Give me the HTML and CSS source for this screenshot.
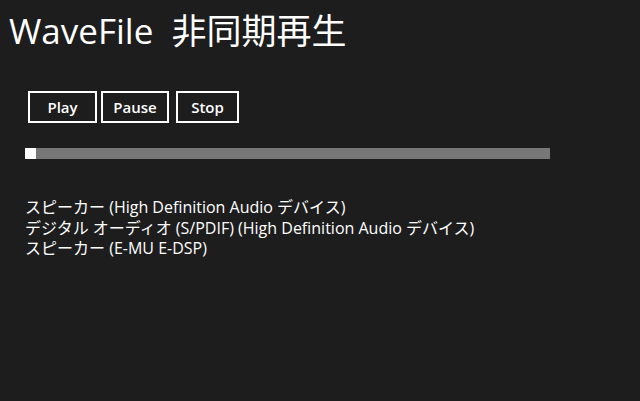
FILE: index.html
```html
<!DOCTYPE html>
<html lang="ja">
<head>
<meta charset="utf-8">
<link rel="stylesheet" href="styles.css">
</head>
<body>
<div class="page">
  <h1 class="title">WaveFile&nbsp;&nbsp;非同期再生</h1>
  <div class="buttons">
    <button class="btn btn-play">Play</button>
    <button class="btn btn-pause">Pause</button>
    <button class="btn btn-stop">Stop</button>
  </div>
  <div class="slider"><div class="thumb"></div></div>
  <ul class="devices">
    <li>スピーカー (High Definition Audio デバイス)</li>
    <li>デジタル オーディオ (S/PDIF) (High Definition Audio デバイス)</li>
    <li>スピーカー (E-MU E-DSP)</li>
  </ul>
</div>
</body>
</html>
```
FILE: styles.css
```css
html, body {
  margin: 0;
  padding: 0;
  background: #1d1d1d;
  width: 640px;
  height: 401px;
  overflow: hidden;
}
.page {
  font-family: "Open Sans", "Noto Sans CJK JP", sans-serif;
  color: #ffffff;
  padding: 0 0 0 9px;
}
.title {
  margin: 0;
  padding-top: 9px;
  font-weight: 400;
  font-size: 35px;
  line-height: 44px;
  letter-spacing: 0;
}
.buttons {
  display: flex;
  margin-top: 38px;
  margin-left: 19px;
}
.btn {
  box-sizing: border-box;
  height: 32px;
  background: transparent;
  border: 2px solid #ffffff;
  color: #ffffff;
  font-family: "Open Sans", sans-serif;
  font-weight: 600;
  font-size: 15px;
  padding: 0;
  margin: 0;
}
.btn-play { width: 69px; margin-right: 4px; }
.btn-pause { width: 68px; margin-right: 7px; }
.btn-stop { width: 63px; }
.slider {
  margin-top: 25px;
  margin-left: 16px;
  width: 525px;
  height: 11px;
  background: #777777;
}
.thumb {
  width: 11px;
  height: 11px;
  background: #ffffff;
}
.devices {
  list-style: none;
  margin: 38px 0 0 16px;
  padding: 0;
  font-size: 16px;
  line-height: 20.5px;
  letter-spacing: 0;
}
```
